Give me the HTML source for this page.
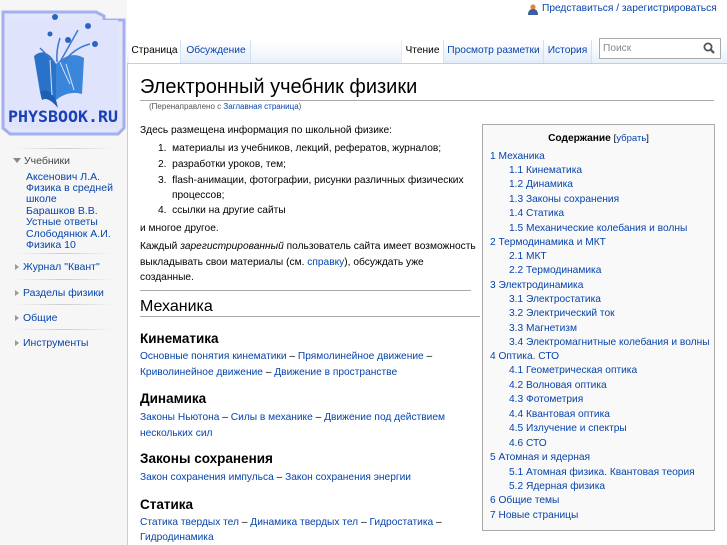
<!DOCTYPE html>
<html><head><meta charset="utf-8"><style>
*{margin:0;padding:0;box-sizing:border-box}
body{width:727px;height:545px;overflow:hidden;background:#f6f6f6;font-family:"Liberation Sans","DejaVu Sans",sans-serif;color:#000;position:relative}
a{color:#0645ad;text-decoration:none}
.abs{position:absolute;white-space:nowrap}
#content{position:absolute;left:127px;top:63px;width:600px;height:482px;background:#fff;border-left:1px solid #a7d7f9;border-top:1px solid #a7d7f9}
.t{font-size:10.2px;line-height:12px}
.tab{position:absolute;top:40px;height:23px;font-size:10.2px;padding-top:5px;text-align:center;background:linear-gradient(#fff,#eef4fc 60%,#e2ecf9);border-right:1px solid #cfe1f5}
.tab.sel{background:#fff}
.sb{font-size:10.5px;line-height:11px;color:#0645ad}
.sep{position:absolute;left:16px;width:96px;height:1px;background:linear-gradient(90deg,#f6f6f6,#ccc,#f6f6f6)}
.tri{display:inline-block;width:0;height:0;border-top:3px solid transparent;border-bottom:3px solid transparent;border-left:4px solid #999;margin-right:4px;vertical-align:0}
.toc .i{position:absolute;white-space:nowrap;font-size:10.2px}
h3{position:absolute;font-size:13.5px;font-weight:bold;white-space:nowrap}
</style></head><body>
<div style="position:absolute;left:127px;top:0;width:600px;height:63px;background:#fff"></div>
<div style="position:absolute;left:127px;top:40px;width:600px;height:23px;background:linear-gradient(#fff,#f3f7fd 60%,#e8f0fa)"></div>
<!-- logo -->
<svg class="abs" style="left:0;top:0" width="127" height="140" viewBox="0 0 127 140">
<rect x="0" y="0" width="127" height="140" fill="#f6f6f6"/>
<path d="M3 12 H96 L104 16 V20 H124 V128 L118 134 H10 L3 128 Z" fill="#e2e6fb" stroke="#a5aef0" stroke-width="3"/>
<rect x="8" y="20" width="110" height="108" fill="#dfe3fb"/>
<path d="M34 56 Q46 46 56 64 L56 100 Q46 88 40 92 Z" fill="#2a72c9"/>
<path d="M56 64 Q70 50 84 58 L82 94 Q68 90 56 100 Z" fill="#3a86da"/>
<path d="M40 92 Q48 86 56 100 L58 108 Q48 96 42 100 Z" fill="#1d5fb0"/>
<path d="M60 62 Q64 72 70 84 M66 64 L74 90 M50 60 L52 95" stroke="#d6e4fa" stroke-width="1" fill="none"/>
<path d="M57 62 Q56 50 60 38 M60 62 L78 30 M64 62 Q74 48 90 44 M54 62 Q44 52 40 48" stroke="#3a7ad0" stroke-width="1.5" fill="none"/>
<circle cx="55" cy="17" r="3" fill="#2a66c0"/><circle cx="50" cy="34" r="2.5" fill="#2a66c0"/>
<circle cx="88" cy="26" r="3" fill="#2a66c0"/><circle cx="68" cy="40" r="3" fill="#2a66c0"/><circle cx="95" cy="44" r="3" fill="#2a66c0"/>
<text x="63" y="122" text-anchor="middle" font-family="DejaVu Sans Mono,Liberation Mono,monospace" font-weight="bold" font-size="16" fill="#1a40b8" textLength="110" lengthAdjust="spacingAndGlyphs">PHYSBOOK.RU</text>
</svg>
<svg class="abs" style="left:528px;top:4px" width="10" height="11"><circle cx="5" cy="3" r="2.6" fill="#d98a3a"/><path d="M0 11 Q0 5 5 5 Q10 5 10 11 Z" fill="#3b5fa0"/></svg>
<div class="abs" style="left:542px;top:3px;font-size:10.2px"><a>Представиться / зарегистрироваться</a></div>
<div class="tab sel" style="left:129px;width:52px">Страница</div>
<div class="tab" style="left:182px;width:69px"><a>Обсуждение</a></div>
<div class="tab sel" style="left:401px;width:43px;border-left:1px solid #e3edf8">Чтение</div>
<div class="tab" style="left:444px;width:100px"><a>Просмотр разметки</a></div>
<div class="tab" style="left:544px;width:48px"><a>История</a></div>
<div class="abs" style="left:599px;top:38px;width:122px;height:21px;border:1px solid #aaa;background:#fff;font-size:10.2px;color:#888;padding:4px 0 0 3px">Поиск</div>
<svg class="abs" style="left:703px;top:42px" width="12" height="12"><circle cx="5" cy="5" r="3.6" stroke="#555" stroke-width="1.8" fill="none"/><path d="M7.5 7.5 L11 11" stroke="#555" stroke-width="2.2"/></svg>
<!-- sidebar -->
<div class="sep" style="top:148px"></div>
<div class="abs" style="left:13px;top:155px;font-size:10.5px;color:#444"><span style="display:inline-block;border-left:4px solid transparent;border-right:4px solid transparent;border-top:5px solid #888;margin-right:3px;vertical-align:1px"></span>Учебники</div>
<div class="abs sb" style="left:26px;top:172px">Аксенович Л.А.<br>Физика в средней<br>школе</div>
<div class="abs sb" style="left:26px;top:206px">Барашков В.В.<br>Устные ответы</div>
<div class="abs sb" style="left:26px;top:229px">Слободянюк А.И.<br>Физика 10</div>
<div class="sep" style="top:253px"></div>
<div class="abs sb" style="left:15px;top:262px"><span class="tri"></span>Журнал "Квант"</div>
<div class="sep" style="top:279px"></div>
<div class="abs sb" style="left:15px;top:288px"><span class="tri"></span>Разделы физики</div>
<div class="sep" style="top:304px"></div>
<div class="abs sb" style="left:15px;top:313px"><span class="tri"></span>Общие</div>
<div class="sep" style="top:329px"></div>
<div class="abs sb" style="left:15px;top:338px"><span class="tri"></span>Инструменты</div>
<!-- content -->
<div id="content"></div>
<div class="abs" style="left:140px;top:76px;font-size:20px;color:#000">Электронный учебник физики</div>
<div class="abs" style="left:140px;top:100px;width:574px;height:1px;background:#aaa"></div>
<div class="abs" style="left:149px;top:102px;font-size:8px;color:#555">(Перенаправлено с <a>Заглавная страница</a>)</div>
<div class="abs t" style="left:140px;top:125px">Здесь размещена информация по школьной физике:</div>
<div class="abs t" style="left:158px;top:143px">1.&nbsp; материалы из учебников, лекций, рефератов, журналов;</div>
<div class="abs t" style="left:158px;top:159px">2.&nbsp; разработки уроков, тем;</div>
<div class="abs t" style="left:158px;top:175px">3.&nbsp; flash-анимации, фотографии, рисунки различных физических</div>
<div class="abs t" style="left:172px;top:190px">процессов;</div>
<div class="abs t" style="left:158px;top:205px">4.&nbsp; ссылки на другие сайты</div>
<div class="abs t" style="left:140px;top:223px">и многое другое.</div>
<div class="abs t" style="left:140px;top:241px">Каждый <i>зарегистрированный</i> пользователь сайта имеет возможность</div>
<div class="abs t" style="left:140px;top:257px">выкладывать свои материалы (см. <a>справку</a>), обсуждать уже</div>
<div class="abs t" style="left:140px;top:272px">созданные.</div>
<div class="abs" style="left:140px;top:290px;width:331px;height:1px;background:#aaa"></div>
<div class="abs" style="left:140px;top:298px;font-size:16px">Механика</div>
<div class="abs" style="left:140px;top:316px;width:340px;height:1px;background:#aaa"></div>
<h3 style="left:140px;top:331px">Кинематика</h3>
<div class="abs t" style="left:140px;top:351px"><a>Основные понятия кинематики</a> – <a>Прямолинейное движение</a> –</div>
<div class="abs t" style="left:140px;top:367px"><a>Криволинейное движение</a> – <a>Движение в пространстве</a></div>
<h3 style="left:140px;top:391px">Динамика</h3>
<div class="abs t" style="left:140px;top:412px"><a>Законы Ньютона</a> – <a>Силы в механике</a> – <a>Движение под действием</a></div>
<div class="abs t" style="left:140px;top:428px"><a>нескольких сил</a></div>
<h3 style="left:140px;top:451px">Законы сохранения</h3>
<div class="abs t" style="left:140px;top:472px"><a>Закон сохранения импульса</a> – <a>Закон сохранения энергии</a></div>
<h3 style="left:140px;top:497px">Статика</h3>
<div class="abs t" style="left:140px;top:517px"><a>Статика твердых тел</a> – <a>Динамика твердых тел</a> – <a>Гидростатика</a> –</div>
<div class="abs t" style="left:140px;top:532px"><a>Гидродинамика</a></div>
<!-- TOC -->
<div class="abs toc" style="left:482px;top:124px;width:233px;height:407px;background:#f9f9f9;border:1px solid #aaa">
<div class="abs" style="left:0;width:231px;top:8px;text-align:center;font-size:10.2px"><b>Содержание</b> <span style="font-size:9.5px">[<a>убрать</a>]</span></div>
<a class="i" style="left:7px;top:26px">1 Механика</a>
<a class="i" style="left:26px;top:40px">1.1 Кинематика</a>
<a class="i" style="left:26px;top:54px">1.2 Динамика</a>
<a class="i" style="left:26px;top:69px">1.3 Законы сохранения</a>
<a class="i" style="left:26px;top:83px">1.4 Статика</a>
<a class="i" style="left:26px;top:98px">1.5 Механические колебания и волны</a>
<a class="i" style="left:7px;top:112px">2 Термодинамика и МКТ</a>
<a class="i" style="left:26px;top:126px">2.1 МКТ</a>
<a class="i" style="left:26px;top:140px">2.2 Термодинамика</a>
<a class="i" style="left:7px;top:155px">3 Электродинамика</a>
<a class="i" style="left:26px;top:169px">3.1 Электростатика</a>
<a class="i" style="left:26px;top:183px">3.2 Электрический ток</a>
<a class="i" style="left:26px;top:198px">3.3 Магнетизм</a>
<a class="i" style="left:26px;top:212px">3.4 Электромагнитные колебания и волны</a>
<a class="i" style="left:7px;top:226px">4 Оптика. СТО</a>
<a class="i" style="left:26px;top:240px">4.1 Геометрическая оптика</a>
<a class="i" style="left:26px;top:255px">4.2 Волновая оптика</a>
<a class="i" style="left:26px;top:269px">4.3 Фотометрия</a>
<a class="i" style="left:26px;top:284px">4.4 Квантовая оптика</a>
<a class="i" style="left:26px;top:298px">4.5 Излучение и спектры</a>
<a class="i" style="left:26px;top:313px">4.6 СТО</a>
<a class="i" style="left:7px;top:327px">5 Атомная и ядерная</a>
<a class="i" style="left:26px;top:342px">5.1 Атомная физика. Квантовая теория</a>
<a class="i" style="left:26px;top:356px">5.2 Ядерная физика</a>
<a class="i" style="left:7px;top:370px">6 Общие темы</a>
<a class="i" style="left:7px;top:385px">7 Новые страницы</a>
</div>
</body></html>
